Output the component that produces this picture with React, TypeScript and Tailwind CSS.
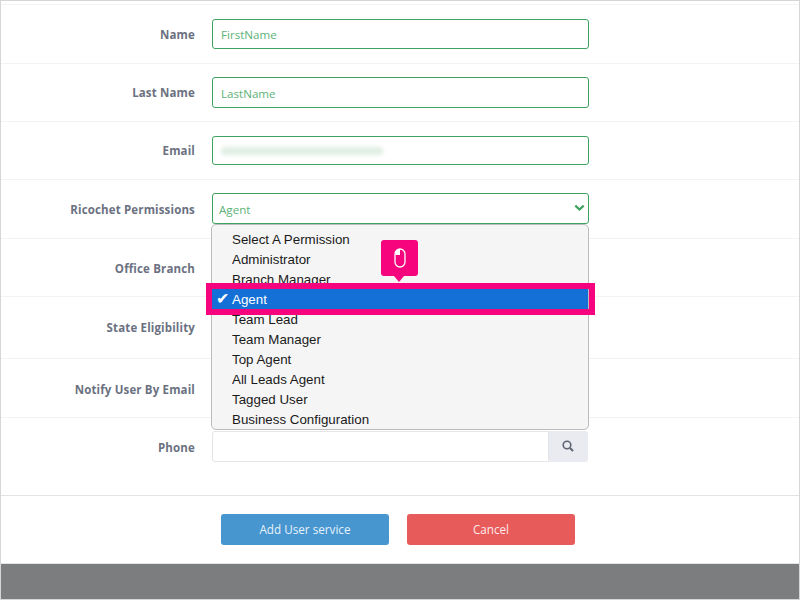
import React from "react";

function Row({ label, h, children, last, labelClass = "" }: { label: string; h: string; children?: React.ReactNode; last?: boolean; labelClass?: string }) {
  return (
    <div className={`${h} flex items-center ${last ? "" : "border-b border-[#f3f3f5]"}`}>
      <div className={`w-[194px] shrink-0 text-right text-[11.5px] font-bold tracking-[0.15px] text-[#6b7181] ${labelClass}`}>{label}</div>
      <div className="ml-[17px] w-[377px]">{children}</div>
    </div>
  );
}

function TextBox({ value, h }: { value?: string; h: string }) {
  return (
    <div className={`${h} flex items-center rounded-[3px] border border-[#3fa35f] pl-2 pt-[2px] text-[11.6px] text-[#5cb377]`}>{value}</div>
  );
}

const options = [
  "Select A Permission",
  "Administrator",
  "Branch Manager",
  "Agent",
  "Team Lead",
  "Team Manager",
  "Top Agent",
  "All Leads Agent",
  "Tagged User",
  "Business Configuration",
];

export default function App() {
  return (
    <div className="relative flex h-[600px] w-[800px] flex-col overflow-hidden border border-[#d6d6d6] bg-white font-['Open_Sans',sans-serif]">
      <div className="h-[4px] border-b border-[#f3f3f5]" />
      <Row label="Name" h="h-[59px]" labelClass="mt-[2px]"><TextBox value="FirstName" h="h-[30px]" /></Row>
      <Row label="Last Name" h="h-[58px]"><TextBox value="LastName" h="h-[31px]" /></Row>
      <Row label="Email" h="h-[58px]">
        <div className="flex h-[29px] items-center rounded-[3px] border border-[#3fa35f] pl-2">
          <div className="h-[8px] w-[162px] rounded-full bg-[#dfeee2] blur-[2px]" />
        </div>
      </Row>
      <Row label="Ricochet Permissions" h="h-[59px]" labelClass="mt-[2px]">
        <div className="mb-[1px] flex h-[31px] items-center justify-between rounded-[3px] border border-[#3fa35f] pl-[6px] pr-[3px] text-[11.6px] text-[#5cb377]">
          <span className="mt-[2px]">Agent</span>
          <svg width="11" height="8" viewBox="0 0 11 8" fill="none" className="mt-[-2px]">
            <path d="M1.3 1.6 5.5 5.6 9.7 1.6" stroke="#3fa35f" strokeWidth="2.2" />
          </svg>
        </div>
      </Row>
      <Row label="Office Branch" h="h-[58px]" labelClass="mt-[2px]" />
      <Row label="State Eligibility" h="h-[62px]" />
      <Row label="Notify User By Email" h="h-[59px]" labelClass="mt-[4px]" />
      <Row label="Phone" h="h-[59px]" last>
        <div className="mr-[1px] mt-[-3px] flex h-[31px]">
          <div className="flex-1 rounded-l-[3px] border border-[#e4e5e9]" />
          <div className="flex w-[39px] items-center justify-center rounded-r-[3px] bg-[#e9ebf0] pr-[2px]">
            <svg width="12" height="12" viewBox="0 0 12 12" fill="none">
              <circle cx="5" cy="5" r="3.8" stroke="#5f6573" strokeWidth="1.6" />
              <path d="M8 8l3 3" stroke="#5f6573" strokeWidth="2" />
            </svg>
          </div>
        </div>
      </Row>
      <div className="h-[18px]" />
      <div className="flex h-[69px] items-start border-y border-[#e3e3e6] pt-[18px]">
        <div className="ml-[220px] flex gap-[18px]">
          <button className="h-[31px] w-[168px] rounded-[3px] bg-[#4796d0] text-[11.7px] text-[#e6f1f9]">Add User service</button>
          <button className="h-[31px] w-[168px] rounded-[3px] bg-[#e85b5b] text-[11.7px] text-[#fdeaea]">Cancel</button>
        </div>
      </div>
      <div className="flex-1 bg-[#7c7d7f]" />

      <div className="absolute left-[210px] top-[223px] h-[206px] w-[378px] overflow-hidden rounded-[5px] border border-[#bcbcbc] bg-[#f5f5f5] pt-[4px] font-['Liberation_Sans',sans-serif] text-[13.33px] leading-[22px] text-[#1a1a1a]">
        {options.map((o) => (
          <div key={o} className={`relative h-[20px] pl-[20px] ${o === "Agent" ? "text-white" : ""}`}>
            {o === "Agent" ? (
              <div className="absolute inset-0 flex bg-[#1470d6] pl-[4px]">
                <span className="w-[16px] text-[16px] leading-[20px]">✔</span>
                <span>Agent</span>
              </div>
            ) : o}
          </div>
        ))}
      </div>
      <div className="absolute left-[205px] top-[282px] h-[32px] w-[389px] border-[6px] border-[#f5047e]" />
      <div className="absolute left-[380px] top-[239px] flex h-[36px] w-[37px] items-center justify-center rounded-[3px] bg-[#f5047e]">
        <svg width="12" height="20" viewBox="0 0 12 20" fill="none">
          <rect x="1" y="1" width="10" height="18" rx="5" stroke="#fff" strokeWidth="1.3" />
          <path d="M1.5 7V5.5A4.5 4.5 0 0 1 6 1v6z" fill="#fff" />
        </svg>
        <div className="absolute bottom-[-6px] left-[13px] h-0 w-0 border-x-[5.5px] border-t-[6px] border-x-transparent border-t-[#f5047e]" />
      </div>
    </div>
  );
}
